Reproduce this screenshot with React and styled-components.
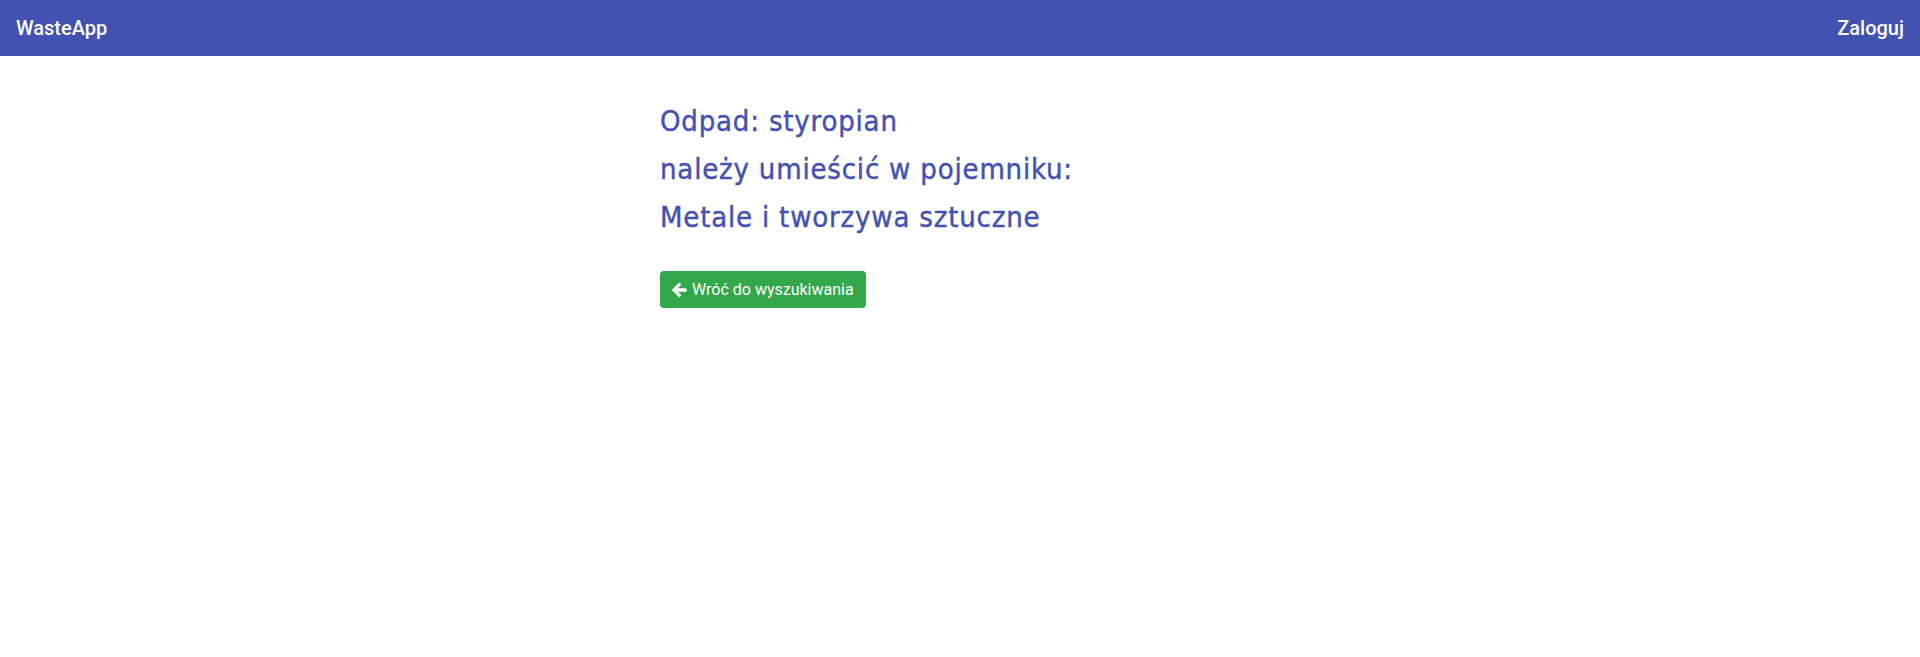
import React from "react";
import styled, { createGlobalStyle } from "styled-components";

const Global = createGlobalStyle`
  html, body { margin: 0; padding: 0; background: #fff; }
  body { font-family: Roboto, "Liberation Sans", sans-serif; }
`;

const Header = styled.header`
  height: 56px;
  background: #4351b0;
  display: flex;
  align-items: center;
  justify-content: space-between;
  padding: 0 16px 0 16px;
  color: #fff;
`;

const Brand = styled.div`
  font-size: 20px;
  font-weight: 500;
`;

const NavLink = styled.a`
  font-size: 20px;
  font-weight: 500;
  color: #fff;
  text-decoration: none;
`;

const Container = styled.main`
  width: 600px;
  margin: 0 auto;
  padding-top: 41px;
`;

const Line = styled.div`
  font-family: "DejaVu Sans Condensed", "DejaVu Sans", sans-serif;
  font-stretch: condensed;
  font-size: 29px;
  line-height: 48px;
  color: #4351b0;
  letter-spacing: 0.8px;
  -webkit-text-stroke: 0.4px #4351b0;
`;

const Heading = styled.h2`
  margin: 0;
  font-weight: normal;
`;

const Button = styled.button`
  margin-top: 30px;
  display: inline-flex;
  align-items: center;
  gap: 5px;
  height: 37px;
  padding: 0 12px;
  background: #33a84a;
  border: none;
  border-radius: 4px;
  color: #fff;
  font-family: Roboto, "Liberation Sans", sans-serif;
  font-size: 16px;
  cursor: pointer;
`;

const ArrowIcon = () => (
  <svg width="15" height="16" viewBox="0 0 448 512" fill="#fff" stroke="#fff" strokeWidth="30">
    <path d="M257.5 445.1l-22.2 22.2c-9.4 9.4-24.6 9.4-33.9 0L7 273c-9.4-9.4-9.4-24.6 0-33.9L201.4 44.7c9.4-9.4 24.6-9.4 33.9 0l22.2 22.2c9.5 9.5 9.3 25-.4 34.3L136.6 216H424c13.3 0 24 10.7 24 24v32c0 13.3-10.7 24-24 24H136.6l120.5 114.8c9.8 9.3 10 24.8.4 34.3z" />
  </svg>
);

export default function App() {
  return (
    <>
      <Global />
      <Header>
        <Brand>WasteApp</Brand>
        <NavLink href="#">Zaloguj</NavLink>
      </Header>
      <Container>
        <Heading>
          <Line>Odpad: styropian</Line>
          <Line>należy umieścić w pojemniku:</Line>
          <Line>Metale i tworzywa sztuczne</Line>
        </Heading>
        <Button>
          <ArrowIcon />
          Wróć do wyszukiwania
        </Button>
      </Container>
    </>
  );
}
